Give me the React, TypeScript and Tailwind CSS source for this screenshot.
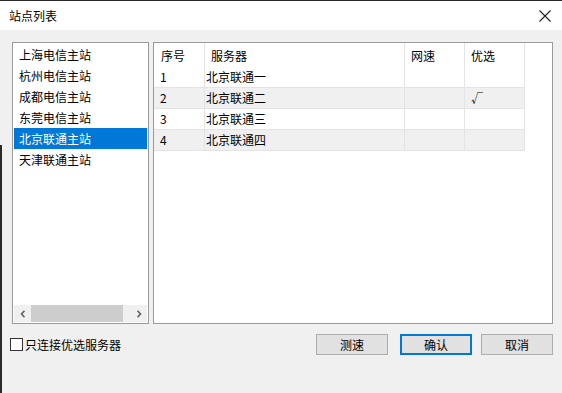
import React, { useState } from 'react';

const stations = ['上海电信主站', '杭州电信主站', '成都电信主站', '东莞电信主站', '北京联通主站', '天津联通主站'];

const servers = [
  { id: 1, name: '北京联通一', speed: '', preferred: false },
  { id: 2, name: '北京联通二', speed: '', preferred: true },
  { id: 3, name: '北京联通三', speed: '', preferred: false },
  { id: 4, name: '北京联通四', speed: '', preferred: false },
];

const font = { fontFamily: '"Noto Sans CJK SC", "Microsoft YaHei", sans-serif' };

const App: React.FC = () => {
  const [selected, setSelected] = useState(4);
  const [onlyPreferred, setOnlyPreferred] = useState(false);

  return (
    <div className="relative w-[562px] h-[393px] flex flex-col bg-[#f0f0f0] text-[12px] text-black overflow-hidden" style={font}>
      {/* Title bar */}
      <div className="h-[30px] shrink-0 flex items-center justify-between bg-white border-t border-[#2a2a2a] pl-[9px] pr-[11px]">
        <span className="leading-none">站点列表</span>
        <svg width="12" height="12" viewBox="0 0 12 12" className="text-[#222]">
          <path d="M0.5 0.5 L11.5 11.5 M11.5 0.5 L0.5 11.5" stroke="currentColor" strokeWidth="1.1" fill="none" />
        </svg>
      </div>

      {/* Body */}
      <div className="flex-1 flex flex-col pl-3 pr-[9px] pt-3">
        <div className="flex gap-1 h-[282px]">
          {/* Station list */}
          <div className="w-[137px] flex flex-col bg-white border border-[#9a9a9a] p-px">
            <div className="flex-1 flex flex-col">
              {stations.map((s, i) => (
                <div
                  key={s}
                  onClick={() => setSelected(i)}
                  className={`h-[21px] flex items-center pl-[5px] whitespace-nowrap cursor-default ${
                    i === selected ? 'bg-[#0078d7] text-white' : ''
                  }`}
                >
                  {s}
                </div>
              ))}
            </div>
            {/* Horizontal scrollbar */}
            <div className="h-[17px] flex items-center bg-[#f0f0f0]">
              <div className="w-[17px] h-full flex items-center justify-center">
                <svg width="6" height="8" viewBox="0 0 6 8">
                  <path d="M4.5 0.8 L1.5 4 L4.5 7.2" stroke="#606060" strokeWidth="1.6" fill="none" />
                </svg>
              </div>
              <div className="flex-1 h-full flex items-center">
                <div className="w-[92px] h-full bg-[#cdcdcd]" />
              </div>
              <div className="w-[17px] h-full flex items-center justify-center">
                <svg width="6" height="8" viewBox="0 0 6 8">
                  <path d="M1.5 0.8 L4.5 4 L1.5 7.2" stroke="#606060" strokeWidth="1.6" fill="none" />
                </svg>
              </div>
            </div>
          </div>

          {/* Server table */}
          <div className="flex-1 bg-white border border-[#9a9a9a]">
            <div className="w-[371px]">
              <div className="h-[24px] flex">
                <div className="w-[51px] border-r border-[#e3e3e3] pl-[7px] pt-[4px]">序号</div>
                <div className="w-[200px] border-r border-[#e3e3e3] pl-[6px] pt-[4px]">服务器</div>
                <div className="w-[60px] border-r border-[#e3e3e3] pl-[6px] pt-[4px]">网速</div>
                <div className="w-[60px] border-r border-[#e3e3e3] pl-[6px] pt-[4px]">优选</div>
              </div>
              {servers.map((r, i) => (
                <div
                  key={r.id}
                  className={`h-[21px] flex border-b border-[#e3e3e3] ${i % 2 === 1 ? 'bg-[#f0f0f0]' : 'bg-white'}`}
                >
                  <div className="w-[51px] border-r border-[#e3e3e3] pl-[6px] flex items-center">{r.id}</div>
                  <div className="w-[200px] border-r border-[#e3e3e3] pl-[1px] flex items-center">{r.name}</div>
                  <div className="w-[60px] border-r border-[#e3e3e3] pl-[6px] flex items-center">{r.speed}</div>
                  <div className="w-[60px] border-r border-[#e3e3e3] pl-[6px] flex items-center">{r.preferred ? '√' : ''}</div>
                </div>
              ))}
            </div>
          </div>
        </div>

        {/* Footer */}
        <div className="flex items-center mt-[10px] -ml-[2px]">
          <label className="flex items-center gap-[2px] cursor-default">
            <span
              onClick={() => setOnlyPreferred(!onlyPreferred)}
              className="w-[13px] h-[13px] border border-[#333] bg-white flex items-center justify-center text-[10px] leading-none"
            >
              {onlyPreferred ? '✓' : ''}
            </span>
            <span>只连接优选服务器</span>
          </label>
          <div className="ml-auto flex">
            <button className="w-[72px] h-[21px] bg-[#e1e1e1] border border-[#adadad] leading-none">测速</button>
            <button className="w-[72px] h-[21px] ml-[12px] bg-[#e1e1e1] border-2 border-[#0078d7] leading-none">确认</button>
            <button className="w-[72px] h-[21px] ml-[9px] bg-[#e1e1e1] border border-[#adadad] leading-none">取消</button>
          </div>
        </div>
      </div>

      <div className="absolute left-0 top-[145px] bottom-0 w-[2px] bg-[#2a2a2a]" />
    </div>
  );
};

export default App;
